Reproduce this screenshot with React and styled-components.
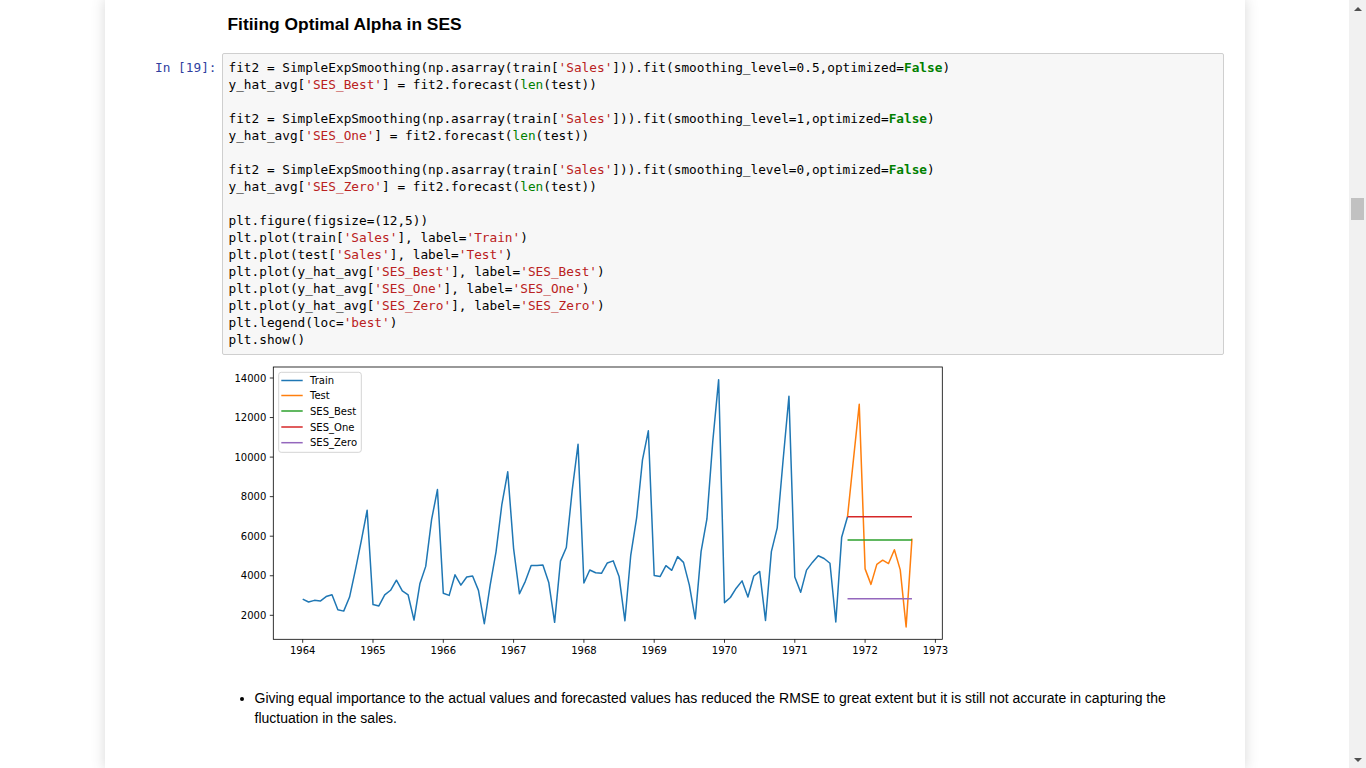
import React from 'react';
import styled, { createGlobalStyle } from 'styled-components';

const GlobalStyle = createGlobalStyle`
  html, body {
    margin: 0;
    padding: 0;
    height: 100%;
    overflow: hidden;
    background: #ffffff;
  }
  #root { height: 100%; }
`;

const Page = styled.div`
  display: flex;
  flex-direction: row;
  height: 100vh;
  width: 100vw;
`;

const Viewport = styled.div`
  flex: 1;
  display: flex;
  justify-content: center;
  overflow: hidden;
`;

const NotebookContainer = styled.div`
  width: 1140px;
  box-sizing: border-box;
  height: 100%;
  background: #ffffff;
  box-shadow: 0px 0px 12px 1px rgba(87, 87, 87, 0.2);
  padding: 0 21px 0 20px;
  display: flex;
  flex-direction: column;
`;

const Cell = styled.div`
  display: flex;
  flex-direction: row;
  margin-top: ${(p) => p.$top || 0}px;
`;

const Prompt = styled.div`
  width: 97px;
  flex: none;
  box-sizing: border-box;
  padding: ${(p) => (p.$code ? '6px 5px 0 0' : '0')};
  text-align: right;
  font-family: "DejaVu Sans Mono", monospace;
  font-size: 12.75px;
  line-height: 17px;
  color: #303f9f;
  white-space: pre;
`;

const Content = styled.div`
  flex: 1;
  min-width: 0;
`;

const InputArea = styled.div`
  border: 1px solid #cfcfcf;
  border-radius: 2px;
  background: #f7f7f7;
  padding: 5px 0 6px 0;
`;

const Code = styled.pre`
  margin: 0;
  padding: 0 6px;
  font-family: "DejaVu Sans Mono", monospace;
  font-size: 12.75px;
  line-height: 17px;
  color: #000000;
  white-space: pre;
`;

const Str = styled.span`
  color: #ba2121;
`;

const Kw = styled.span`
  color: #008000;
  font-weight: bold;
`;

const Builtin = styled.span`
  color: #008000;
`;

const Heading = styled.h3`
  margin: 14px 0 0 0;
  padding-left: 6px;
  font-family: "Liberation Sans", Arial, sans-serif;
  font-size: 17.4px;
  line-height: 20px;
  font-weight: bold;
  color: #000000;
`;

const OutputArea = styled.div`
  margin-top: 3px;
  display: flex;
`;

const BulletList = styled.ul`
  margin: 30px 0 0 0;
  padding-left: 33px;
  list-style: disc;
  font-family: "Liberation Sans", Arial, sans-serif;
  font-size: 14px;
  line-height: 20px;
  color: #000000;
`;

const Scrollbar = styled.div`
  width: 17px;
  flex: none;
  background: #f1f1f1;
  display: flex;
  flex-direction: column;
`;

const ScrollArrow = styled.div`
  height: 17px;
  flex: none;
  display: flex;
  align-items: center;
  justify-content: center;
  &::after {
    content: '';
    width: 0;
    height: 0;
    border-left: 4px solid transparent;
    border-right: 4px solid transparent;
    ${(p) =>
      p.$down
        ? 'border-top: 4px solid #505050; margin-top: 1px;'
        : 'border-bottom: 4px solid #505050; margin-top: 1px;'}
  }
`;

const ScrollTrack = styled.div`
  flex: 1;
  display: flex;
  flex-direction: column;
  align-items: center;
`;

const ScrollThumb = styled.div`
  margin-top: 181px;
  width: 13px;
  height: 22px;
  background: #c1c1c1;
`;

/* ---------- chart ---------- */

const sales = [
  2815, 2672, 2755, 2721, 2946, 3036, 2282, 2212, 2922, 4301, 5764, 7312,
  2541, 2475, 3031, 3266, 3776, 3230, 3028, 1759, 3595, 4474, 6838, 8357,
  3113, 3006, 4047, 3523, 3937, 3986, 3260, 1573, 3528, 5211, 7614, 9254,
  5375, 3088, 3718, 4514, 4520, 4539, 3663, 1643, 4739, 5428, 8314, 10651,
  3633, 4292, 4154, 4121, 4647, 4753, 3965, 1723, 5048, 6922, 9858, 11331,
  4016, 3957, 4510, 4276, 4968, 4677, 3523, 1821, 5222, 6872, 10803, 13916,
  2639, 2899, 3370, 3740, 2927, 3986, 4217, 1738, 5221, 6424, 9842, 13076,
  3934, 3162, 4286, 4676, 5010, 4874, 4633, 1659, 5951, 6981, 9851, 12670,
  4348, 3564, 4577, 4788, 4618, 5312, 4298, 1413, 5877,
];

const X0 = 302.7;
const YR = 70.3;
const px = (i) => X0 + (i / 12) * YR;
const py = (v) => 615.3 - (v - 2000) * 0.019775;

const SPLIT = 93;
const trainPts = sales
  .slice(0, SPLIT + 1)
  .map((v, i) => `${px(i).toFixed(2)},${py(v).toFixed(2)}`)
  .join(' ');
const testPts = sales
  .slice(SPLIT)
  .map((v, i) => `${px(i + SPLIT).toFixed(2)},${py(v).toFixed(2)}`)
  .join(' ');

const FRAME = { l: 273.3, r: 942.3, t: 367, b: 639.3 };
const yTicks = [2000, 4000, 6000, 8000, 10000, 12000, 14000];
const xTicks = [1964, 1965, 1966, 1967, 1968, 1969, 1970, 1971, 1972, 1973];

const C = {
  train: '#1f77b4',
  test: '#ff7f0e',
  best: '#2ca02c',
  one: '#d62728',
  zero: '#9467bd',
};

const hStart = px(SPLIT);
const hEnd = px(sales.length - 1);

const legendItems = [
  { label: 'Train', color: C.train, y: 380.5 },
  { label: 'Test', color: C.test, y: 395.5 },
  { label: 'SES_Best', color: C.best, y: 411 },
  { label: 'SES_One', color: C.one, y: 427 },
  { label: 'SES_Zero', color: C.zero, y: 442.7 },
];

const ChartSvg = styled.svg`
  display: block;
  font-family: "DejaVu Sans", sans-serif;
  font-size: 10px;
`;

function SalesChart() {
  return (
    <ChartSvg width="730" height="300" viewBox="222 358 730 300">
      <rect x={FRAME.l} y={FRAME.t} width={FRAME.r - FRAME.l} height={FRAME.b - FRAME.t} fill="#fff" />
      <polyline points={trainPts} fill="none" stroke={C.train} strokeWidth="1.5" strokeLinejoin="round" />
      <polyline points={testPts} fill="none" stroke={C.test} strokeWidth="1.5" strokeLinejoin="round" />
      <line x1={hStart} x2={hEnd} y1={py(5808)} y2={py(5808)} stroke={C.best} strokeWidth="1.5" />
      <line x1={hStart} x2={hEnd} y1={py(6981)} y2={py(6981)} stroke={C.one} strokeWidth="1.5" />
      <line x1={hStart} x2={hEnd} y1={py(2839)} y2={py(2839)} stroke={C.zero} strokeWidth="1.5" />
      <rect
        x={FRAME.l}
        y={FRAME.t}
        width={FRAME.r - FRAME.l}
        height={FRAME.b - FRAME.t}
        fill="none"
        stroke="#000"
        strokeWidth="0.8"
      />
      {yTicks.map((v) => (
        <g key={v}>
          <line x1={FRAME.l - 3.5} x2={FRAME.l} y1={py(v)} y2={py(v)} stroke="#000" strokeWidth="0.8" />
          <text x={FRAME.l - 7} y={py(v) + 3.6} textAnchor="end" fill="#000">
            {v}
          </text>
        </g>
      ))}
      {xTicks.map((yr) => {
        const x = X0 + (yr - 1964) * YR;
        return (
          <g key={yr}>
            <line x1={x} x2={x} y1={FRAME.b} y2={FRAME.b + 3.5} stroke="#000" strokeWidth="0.8" />
            <text x={x} y={FRAME.b + 14.2} textAnchor="middle" fill="#000">
              {yr}
            </text>
          </g>
        );
      })}
      <rect
        x="278.7"
        y="372.3"
        width="82.6"
        height="80"
        rx="2.5"
        fill="rgba(255,255,255,0.8)"
        stroke="#d4d4d4"
        strokeWidth="1"
      />
      {legendItems.map((it) => (
        <g key={it.label}>
          <line x1="281.3" x2="302.7" y1={it.y} y2={it.y} stroke={it.color} strokeWidth="1.5" />
          <text x="310" y={it.y + 3.6} fill="#000">
            {it.label}
          </text>
        </g>
      ))}
    </ChartSvg>
  );
}

export default function App() {
  return (
    <>
      <GlobalStyle />
      <Page>
        <Viewport>
          <NotebookContainer>
            <Cell>
              <Prompt />
              <Content>
                <Heading>Fitiing Optimal Alpha in SES</Heading>
              </Content>
            </Cell>

            <Cell $top={19}>
              <Prompt $code>In [19]:</Prompt>
              <Content>
                <InputArea>
                  <Code>
                    {'fit2 = SimpleExpSmoothing(np.asarray(train['}<Str>'Sales'</Str>{'])).fit(smoothing_level=0.5,optimized='}<Kw>False</Kw>{')\n'}
                    {'y_hat_avg['}<Str>'SES_Best'</Str>{'] = fit2.forecast('}<Builtin>len</Builtin>{'(test))\n'}
                    {'\n'}
                    {'fit2 = SimpleExpSmoothing(np.asarray(train['}<Str>'Sales'</Str>{'])).fit(smoothing_level=1,optimized='}<Kw>False</Kw>{')\n'}
                    {'y_hat_avg['}<Str>'SES_One'</Str>{'] = fit2.forecast('}<Builtin>len</Builtin>{'(test))\n'}
                    {'\n'}
                    {'fit2 = SimpleExpSmoothing(np.asarray(train['}<Str>'Sales'</Str>{'])).fit(smoothing_level=0,optimized='}<Kw>False</Kw>{')\n'}
                    {'y_hat_avg['}<Str>'SES_Zero'</Str>{'] = fit2.forecast('}<Builtin>len</Builtin>{'(test))\n'}
                    {'\n'}
                    {'plt.figure(figsize=(12,5))\n'}
                    {'plt.plot(train['}<Str>'Sales'</Str>{'], label='}<Str>'Train'</Str>{')\n'}
                    {'plt.plot(test['}<Str>'Sales'</Str>{'], label='}<Str>'Test'</Str>{')\n'}
                    {'plt.plot(y_hat_avg['}<Str>'SES_Best'</Str>{'], label='}<Str>'SES_Best'</Str>{')\n'}
                    {'plt.plot(y_hat_avg['}<Str>'SES_One'</Str>{'], label='}<Str>'SES_One'</Str>{')\n'}
                    {'plt.plot(y_hat_avg['}<Str>'SES_Zero'</Str>{'], label='}<Str>'SES_Zero'</Str>{')\n'}
                    {'plt.legend(loc='}<Str>'best'</Str>{')\n'}
                    {'plt.show()'}
                  </Code>
                </InputArea>
              </Content>
            </Cell>

            <Cell>
              <Prompt />
              <Content>
                <OutputArea>
                  <SalesChart />
                </OutputArea>
              </Content>
            </Cell>

            <Cell>
              <Prompt />
              <Content>
                <BulletList>
                  <li>
                    Giving equal importance to the actual values and forecasted values has reduced the RMSE to great
                    extent but it is still not accurate in capturing the
                    <br />
                    fluctuation in the sales.
                  </li>
                </BulletList>
              </Content>
            </Cell>
          </NotebookContainer>
        </Viewport>
        <Scrollbar>
          <ScrollArrow />
          <ScrollTrack>
            <ScrollThumb />
          </ScrollTrack>
          <ScrollArrow $down />
        </Scrollbar>
      </Page>
    </>
  );
}
